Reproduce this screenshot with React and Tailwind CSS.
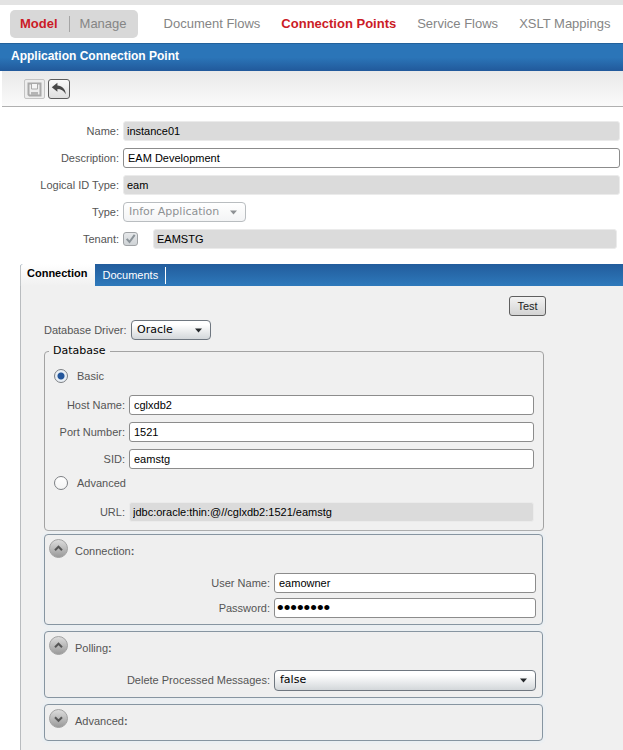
import React, { useState } from 'react';

const fieldClass =
  'h-5 w-full min-w-0 rounded-[3px] border border-[#8c8c8c] bg-white text-black outline-none';
const inputClass = `${fieldClass} px-1 text-[11px]`;
const readOnlyClass =
  'h-5 w-full min-w-0 rounded-[3px] border border-[#ebebeb] bg-[#dbdbdb] px-[3px] text-[11px] text-black outline-none';
const radioClass =
  'h-[14px] w-[14px] shrink-0 appearance-none rounded-full border border-[#7d8084] bg-[linear-gradient(#ffffff,#f4f4f4)] checked:bg-[radial-gradient(circle,#24569b_3px,#e9eff5_4px)]';

function Row({ id, label, labelClass, children }) {
  return (
    <div className="flex items-center gap-1">
      <label htmlFor={id} className={`${labelClass} shrink-0 text-right whitespace-nowrap`}>
        {label}:
      </label>
      {children}
    </div>
  );
}

function Select({ id, value, options, onChange, disabled, className }) {
  const look = disabled
    ? 'border-[#b9bdc0] bg-[linear-gradient(#ffffff,#f3f4f5)] text-[#8e9194]'
    : 'border-[#6f7780] bg-[linear-gradient(#ffffff_20%,#d3d7da)] text-black';

  return (
    <div className={`relative ${className}`}>
      <select
        id={id}
        value={value}
        disabled={disabled}
        onChange={(e) => onChange(e.target.value)}
        className={`h-full w-full appearance-none rounded-[4px] border pl-[5px] font-['DejaVu_Sans',sans-serif] text-[11px] opacity-100 outline-none ${look}`}
      >
        {options.map((option) => (
          <option key={option}>{option}</option>
        ))}
      </select>
      <svg
        viewBox="0 0 7 5"
        className={`pointer-events-none absolute top-2 right-[9px] h-[5px] w-[7px] ${
          disabled ? 'fill-[#8e9194]' : 'fill-[#25282b]'
        }`}
      >
        <path d="M0 0.5h7L3.5 4.5z" />
      </svg>
    </div>
  );
}

function Section({ title, open, onToggle, children }) {
  return (
    <section className="mr-[3px] rounded-[4px] border border-[#8795a1] bg-[#efefef] pt-1 pr-1.5 shadow-[0_0_3px_2px_#e9eff3]">
      <div className="flex items-end gap-[7px] pl-1">
        <button type="button" aria-expanded={open} aria-label={title} onClick={onToggle} className="h-[19px] w-[19px]">
          <svg viewBox="0 0 19 19" className="h-full w-full">
            <defs>
              <linearGradient id={`knob-${title}`} x1="0" y1="0" x2="0" y2="1">
                <stop offset="0" stopColor="#dedede" />
                <stop offset="1" stopColor="#989898" />
              </linearGradient>
            </defs>
            <circle cx="9.5" cy="9.5" r="9" fill={`url(#knob-${title})`} stroke="#a3a3a3" />
            <path
              d={open ? 'M6 11.2L9.5 7.7L13 11.2' : 'M6 8.3L9.5 11.8L13 8.3'}
              fill="none"
              stroke="#555"
              strokeWidth="2"
            />
          </svg>
        </button>
        <h2 className="leading-[13px]">
          {title}
          <b>:</b>
        </h2>
      </div>
      {open ? children : <div className="h-3" />}
    </section>
  );
}

function App() {
  const [driver, setDriver] = useState('Oracle');
  const [mode, setMode] = useState('basic');
  const [deleteProcessed, setDeleteProcessed] = useState('false');
  const [open, setOpen] = useState({ connection: true, polling: true, advanced: false });

  const toggle = (name) => setOpen({ ...open, [name]: !open[name] });

  return (
    <div className="flex min-h-screen flex-col bg-white font-['Liberation_Sans',Arial,sans-serif] text-[11px] text-[#555]">
      <header className="flex items-center gap-[26px] border-t-[5px] border-[#e3e3e3] pt-[5px] pb-[5px] pl-[10px] text-[13px] text-[#858585]">
        <div className="flex h-7 items-center rounded-[5px] bg-[#d8d8d8] pr-[11px] pl-[10px]">
          <a href="#model" className="font-bold text-[#cb1b26]">Model</a>
          <span className="mr-[10px] ml-[11px] h-4 w-px bg-[#a5a5a5]" />
          <a href="#manage">Manage</a>
        </div>
        <nav className="flex gap-[21px] whitespace-nowrap">
          <a href="#document-flows">Document Flows</a>
          <a href="#connection-points" className="font-bold text-[#cb1b26]">Connection Points</a>
          <a href="#service-flows">Service Flows</a>
          <a href="#xslt-mappings">XSLT Mappings</a>
        </nav>
      </header>

      <h1 className="h-7 border-t border-[#22619b] bg-[linear-gradient(#2b75b8_50%,#21599b)] pl-[11px] text-[12px] leading-[25px] font-bold text-white">
        Application Connection Point
      </h1>

      <div className="ml-0.5 flex h-9 gap-[3px] border-b border-[#b0b0b0] bg-[linear-gradient(#e9e9e9,#fafafa)] pt-2 pl-[22px]">
        <button type="button" aria-label="Save" disabled className="flex h-5 w-[21px] items-center justify-center rounded-[2px] border border-[#c4c4c4] bg-[#ededed]">
          <svg viewBox="0 0 15 15" className="h-[15px] w-[15px]" fill="none" stroke="#a9a9a9">
            <path d="M1.5 1.5h12v12h-11l-1-1z" strokeWidth="2" />
            <path d="M4.5 2v5h6V2" fill="#f5f5f5" />
            <path d="M4 10h7v3H4z" fill="#b5b5b5" stroke="none" />
          </svg>
        </button>
        <button type="button" aria-label="Undo" className="flex h-5 w-[22px] items-center justify-center rounded-[3px] border border-[#5c5c5c] bg-[linear-gradient(#fafafa,#dedede)]">
          <svg viewBox="0 0 16 14" className="h-[14px] w-4" fill="#484848">
            <path d="M0.8 5.2L6.4 0.8V3.6C11 3.8 14.4 7 14.8 12.2C12.6 8.6 10 7.2 6.4 7.1V9.8z" />
          </svg>
        </button>
      </div>

      <form className="flex flex-col gap-[7px] pt-[14px] pr-[3px]">
        <Row id="name" label="Name" labelClass="w-[119px]">
          <input id="name" readOnly defaultValue="instance01" className={readOnlyClass} />
        </Row>
        <Row id="description" label="Description" labelClass="w-[119px]">
          <input id="description" defaultValue="EAM Development" className={inputClass} />
        </Row>
        <Row id="logical-id" label="Logical ID Type" labelClass="w-[119px]">
          <input id="logical-id" readOnly defaultValue="eam" className={readOnlyClass} />
        </Row>
        <Row id="type" label="Type" labelClass="w-[119px]">
          <Select
            id="type"
            value="Infor Application"
            options={['Infor Application']}
            onChange={() => {}}
            disabled
            className="h-5 w-[123px]"
          />
        </Row>
        <Row id="tenant" label="Tenant" labelClass="w-[119px]">
          <span className="relative mr-[11px] h-[14px] w-[15px] shrink-0">
            <input
              id="tenant"
              type="checkbox"
              defaultChecked
              disabled
              className="block h-[14px] w-[15px] appearance-none rounded-[3px] border border-[#a0a3a6] bg-[linear-gradient(#e6e8ea,#cfd3d6)]"
            />
            <svg viewBox="0 0 14 14" className="pointer-events-none absolute inset-0 h-[14px] w-[15px]" fill="none" stroke="#8b9399" strokeWidth="2">
              <path d="M3.2 6.8L6 10L11.2 2.8" />
            </svg>
          </span>
          <input aria-label="Tenant name" readOnly defaultValue="EAMSTG" className={`${readOnlyClass} mr-[3px]`} />
        </Row>
      </form>

      <div className="mt-[15px] ml-5 flex grow flex-col">
        <div role="tablist" className="flex h-[22px] items-start rounded-tl-[4px] bg-[linear-gradient(#225c9c,#2e79bb)]">
          <button type="button" role="tab" aria-selected="true" className="h-full rounded-tl-[3px] border-l border-[#c0c4c7] bg-[linear-gradient(#ffffff,#f0f0f0)] pr-[7px] pb-[3px] pl-1.5 font-bold text-black">
            Connection
          </button>
          <button type="button" role="tab" aria-selected="false" className="mt-[3px] h-[17px] border-r border-white pr-[7px] pl-2 text-white">
            Documents
          </button>
        </div>

        <div className="grow border-l border-[#b9bcbf] bg-[#f0f0f0] pt-[10px] pr-[77px] pb-[9px] pl-[23px]">
          <div className="flex justify-end">
            <button type="button" className="h-5 w-[37px] rounded-[3px] border border-[#5f5f5f] bg-[linear-gradient(#f3f3f3,#d3d3d3)] text-[#222]">
              Test
            </button>
          </div>

          <div className="mt-1 flex items-center gap-1">
            <label htmlFor="driver" className="w-[83px] whitespace-nowrap">Database Driver:</label>
            <Select
              id="driver"
              value={driver}
              options={['Oracle', 'SQL Server', 'DB2']}
              onChange={setDriver}
              className="h-5 w-20"
            />
          </div>

          <fieldset className="mt-[3px] mr-0.5 rounded-[4px] border border-[#a3a3a3] px-[9px] pb-2">
            <legend className="-ml-[5px] h-4 px-1 font-['DejaVu_Sans',sans-serif] leading-4 text-black">
              Database
            </legend>
            <div className="mt-[10px] flex h-[14px] items-center gap-[9px]">
              <input id="basic" type="radio" name="mode" checked={mode === 'basic'} onChange={() => setMode('basic')} className={radioClass} />
              <label htmlFor="basic">Basic</label>
            </div>
            <div className="mt-3 flex flex-col gap-[7px]">
              <Row id="host" label="Host Name" labelClass="w-[71px]">
                <input id="host" defaultValue="cglxdb2" className={inputClass} />
              </Row>
              <Row id="port" label="Port Number" labelClass="w-[71px]">
                <input id="port" defaultValue="1521" className={inputClass} />
              </Row>
              <Row id="sid" label="SID" labelClass="w-[71px]">
                <input id="sid" defaultValue="eamstg" className={inputClass} />
              </Row>
            </div>
            <div className="mt-[7px] flex h-[14px] items-center gap-[9px]">
              <input id="advanced" type="radio" name="mode" checked={mode === 'advanced'} onChange={() => setMode('advanced')} className={radioClass} />
              <label htmlFor="advanced">Advanced</label>
            </div>
            <div className="mt-3">
              <Row id="url" label="URL" labelClass="w-[71px]">
                <input id="url" readOnly defaultValue="jdbc:oracle:thin:@//cglxdb2:1521/eamstg" className={readOnlyClass} />
              </Row>
            </div>
          </fieldset>

          <div className="mt-[3px] flex flex-col gap-1.5">
            <Section title="Connection" open={open.connection} onToggle={() => toggle('connection')}>
              <div className="mt-[15px] flex flex-col gap-[5px] pb-1.5">
                <Row id="user" label="User Name" labelClass="w-[225px]">
                  <input id="user" defaultValue="eamowner" className={inputClass} />
                </Row>
                <Row id="password" label="Password" labelClass="w-[225px]">
                  <input id="password" type="password" defaultValue="eamowner" className={`${fieldClass} px-0.5 text-[19px]`} />
                </Row>
              </div>
            </Section>
            <Section title="Polling" open={open.polling} onToggle={() => toggle('polling')}>
              <div className="mt-[15px] pb-1.5">
                <Row id="delete" label="Delete Processed Messages" labelClass="w-[225px]">
                  <Select
                    id="delete"
                    value={deleteProcessed}
                    options={['false', 'true']}
                    onChange={setDeleteProcessed}
                    className="h-[21px] grow"
                  />
                </Row>
              </div>
            </Section>
            <Section title="Advanced" open={open.advanced} onToggle={() => toggle('advanced')} />
          </div>
        </div>
      </div>
    </div>
  );
}

export default App;
